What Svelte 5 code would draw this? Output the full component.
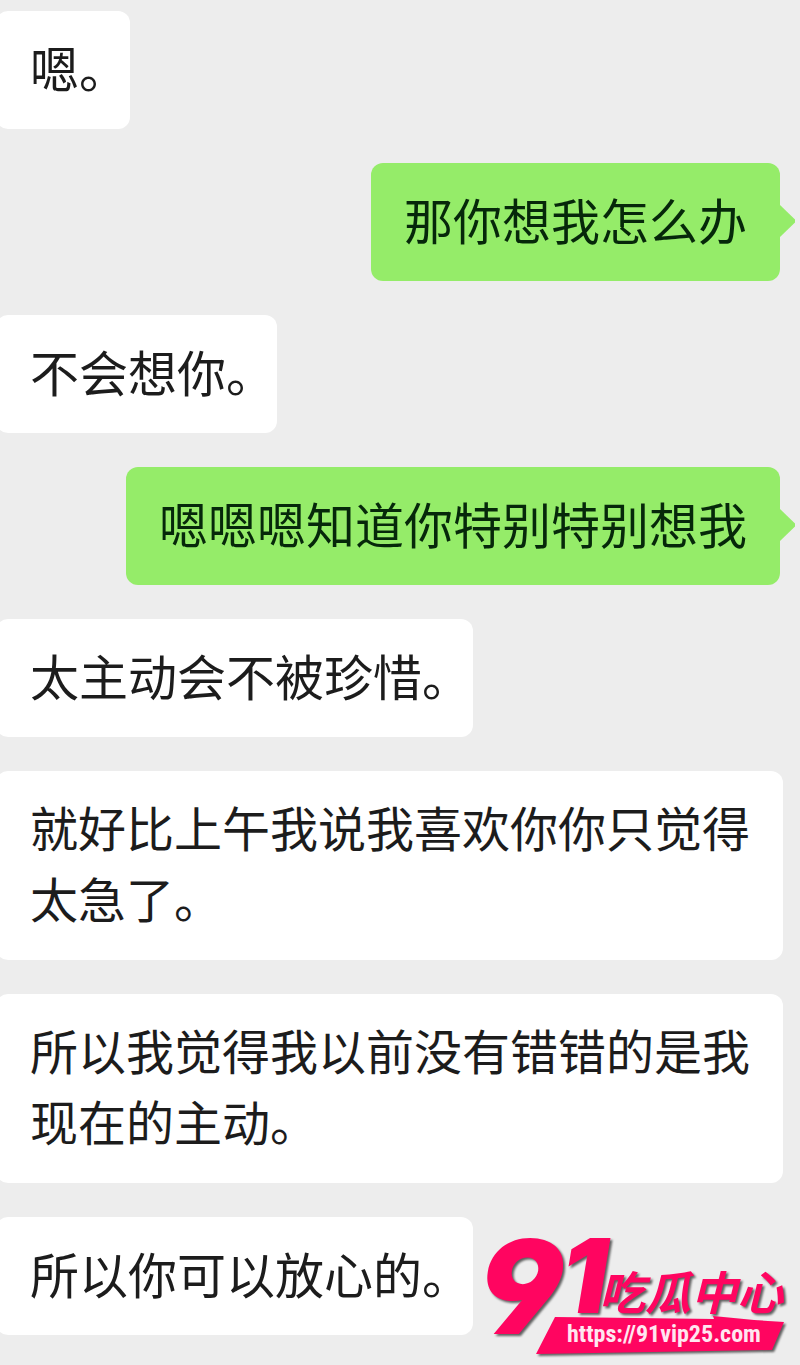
<script lang="ts">
  type Message = { text: string; mine?: boolean; long?: boolean };

  const messages: Message[] = [
    { text: '嗯。' },
    { text: '那你想我怎么办', mine: true },
    { text: '不会想你。' },
    { text: '嗯嗯嗯知道你特别特别想我', mine: true },
    { text: '太主动会不被珍惜。' },
    { text: '就好比上午我说我喜欢你你只觉得太急了。', long: true },
    { text: '所以我觉得我以前没有错错的是我现在的主动。', long: true },
    { text: '所以你可以放心的。' },
  ];
</script>

<main class="chat">
  {#each messages as msg}
    <p class="bubble" class:mine={msg.mine} class:long={msg.long}>{msg.text}</p>
  {/each}

  <a class="brand" href="https://91vip25.com">
    <svg viewBox="0 0 320 160" width="320" height="160">
      <g class="shape">
        <text class="nine" x="-1" y="129">9</text>
        <text class="one" x="81" y="108">1</text>
        <text class="name" x="119" y="105">吃瓜中心</text>
        <path d="M75 112 L234 114 L233 111 L274 115 L304 117 L292 145 L56 149 Z" />
      </g>
      <text class="url" x="87" y="137">https://91vip25.com</text>
    </svg>
  </a>
</main>

<style>
  :global(body) {
    margin: 0;
    background: #ededed;
  }

  .chat {
    position: relative;
    display: flex;
    flex-direction: column;
    align-items: flex-start;
    gap: 34px;
    padding: 11px 17px 30px 0;
    overflow: hidden;
    font-family: 'Noto Sans CJK SC', sans-serif;
  }

  .bubble {
    position: relative;
    margin: 0 0 0 -4px;
    padding: 20px 26px 27px 34px;
    border-radius: 12px;
    background: #fff;
    color: #1c1c1c;
    font-size: 49px;
    line-height: 71px;
    /* closing full stop takes half a cell */
    font-feature-settings: 'halt';
  }

  .bubble.long {
    font-size: 48px;
  }

  .bubble.mine {
    align-self: flex-end;
    margin: 0 3px 0 0;
    padding: 20px 33px 27px;
    background: #95ec69;
    color: #06280a;
  }

  .mine::after {
    content: '';
    position: absolute;
    top: 42px;
    left: 100%;
    width: 15px;
    height: 32px;
    background: #95ec69;
    clip-path: polygon(0 0, 100% 45%, 100% 55%, 0 100%);
  }

  .brand {
    position: absolute;
    right: 0;
    bottom: 0;
  }

  .brand svg {
    display: block;
    overflow: visible;
  }

  .shape {
    fill: #ff0560;
    filter: drop-shadow(2px 2px 1px #0009);
  }

  .nine,
  .one {
    font-family: Inter, sans-serif;
    font-weight: 900;
    font-style: italic;
  }

  .nine {
    font-size: 130px;
    /* open nine with a straight tail */
    font-feature-settings: 'cv04';
  }

  .one {
    font-size: 103px;
  }

  .name {
    font-size: 46px;
    font-weight: 700;
    font-style: italic;
  }

  .url {
    fill: #ffe6f0;
    font-family: 'Roboto Condensed', Roboto, sans-serif;
    font-size: 24px;
    font-weight: 700;
  }
</style>
